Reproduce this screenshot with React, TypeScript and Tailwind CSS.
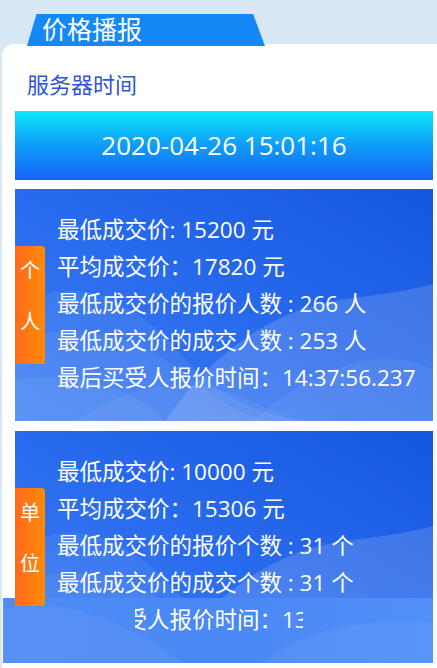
import React from "react";

const font = { fontFamily: '"Open Sans", "Noto Sans CJK SC", sans-serif' };

function Waves() {
  return (
    <svg
      className="pointer-events-none absolute inset-0 h-full w-full"
      viewBox="0 0 418 232"
      preserveAspectRatio="none"
    >
      <path d="M0 120 C 60 80, 120 110, 170 170 C 210 215, 260 230, 300 232 L0 232 Z" fill="#ffffff" opacity="0.07" />
      <path d="M0 150 C 80 130, 130 150, 190 200 C 220 225, 250 232, 260 232 L0 232 Z" fill="#ffffff" opacity="0.06" />
      <path d="M0 190 C 70 185, 120 200, 150 232 L0 232 Z" fill="#ffffff" opacity="0.06" />
      <path d="M150 232 C 200 160, 260 120, 330 110 C 370 105, 400 100, 418 95 L418 232 Z" fill="#ffffff" opacity="0.15" />
      <path d="M240 232 C 270 200, 320 175, 360 170 C 390 168, 405 175, 418 180 L418 232 Z" fill="#ffffff" opacity="0.06" />
      <path d="M60 232 C 110 200, 150 190, 200 200 C 240 210, 260 225, 280 232 Z" fill="#ffffff" opacity="0.05" />
    </svg>
  );
}

function Card({ tab, lines }: { tab: [string, string]; lines: string[] }) {
  return (
    <div className="relative flex h-[232px] w-[418px] items-center overflow-hidden bg-[linear-gradient(30deg,#3b7ef4_0%,#2a6cee_45%,#1556df_100%)]">
      <Waves />
      <div className="relative z-20 flex h-[118px] w-[30px] shrink-0 flex-col items-center gap-[27px] rounded-r-[4px] bg-[linear-gradient(90deg,#ff6a1c,#ff8a06)] pt-[13px] text-[20px] leading-[24px] text-white">
        <span>{tab[0]}</span>
        <span>{tab[1]}</span>
      </div>
      <div className="relative -mt-[3px] flex flex-col pl-[12px] text-[22.5px] leading-[37px] text-white whitespace-nowrap">
        {lines.map((l, i) => (
          <div key={i}>{l}</div>
        ))}
      </div>
    </div>
  );
}

export default function App() {
  return (
    <div style={font} className="relative h-[668px] w-[437px] overflow-hidden bg-[#d7e7f3]">
      <div className="relative z-10 ml-[27px] mt-[14px] flex h-[32px] w-[238px] items-center bg-[#1488f6] pl-[15px] text-[25px] leading-none text-white [clip-path:polygon(4%_0,95%_0,100%_100%,0_100%)]">
        <span className="-mt-[1px]">价格播报</span>
      </div>
      <div className="-mt-[2px] ml-[2px] flex h-[640px] w-[435px] flex-col rounded-tl-[12px] bg-white pl-[13px] pr-[4px] pt-[25px]">
        <div className="pl-[12px] text-[22px] leading-[30px] text-[#2f55d4]">服务器时间</div>
        <div className="mt-[12px] flex h-[69px] w-[418px] items-center justify-center bg-[linear-gradient(180deg,#0be8f9_0%,#0f9cf8_50%,#1463f8_100%)] text-[26px] text-white">
          2020-04-26 15:01:16
        </div>
        <div className="mt-[9px] flex flex-col gap-[10px]">
          <Card
            tab={["个", "人"]}
            lines={[
              "最低成交价: 15200 元",
              "平均成交价：17820 元",
              "最低成交价的报价人数 : 266 人",
              "最低成交价的成交人数 : 253 人",
              "最后买受人报价时间：14:37:56.237",
            ]}
          />
          <Card
            tab={["单", "位"]}
            lines={[
              "最低成交价: 10000 元",
              "平均成交价：15306 元",
              "最低成交价的报价个数 : 31 个",
              "最低成交价的成交个数 : 31 个",
              "最后买受人报价时间：13:52:11.402",
            ]}
          />
        </div>
      </div>
      <div className="absolute left-[3px] top-[598px] z-10 h-[65px] w-[430px] overflow-hidden bg-[linear-gradient(90deg,#4e8cf6,#4a88f5_50%,#5090f8)]">
        <svg className="absolute inset-0 h-full w-full" viewBox="0 0 430 65" preserveAspectRatio="none">
          <path d="M0 10 C 60 0, 120 20, 180 65 L0 65 Z" fill="#ffffff" opacity="0.05" />
          <path d="M260 65 C 300 30, 360 20, 430 25 L430 65 Z" fill="#ffffff" opacity="0.05" />
        </svg>
        <div className="absolute left-[132px] top-0 h-full w-[168px] overflow-hidden">
          <div className="absolute left-[-78px] top-[3px] whitespace-nowrap text-[22.5px] leading-[37px] text-white">
            最后买受人报价时间：13:52:11.402
          </div>
        </div>
      </div>
      <div className="absolute left-[135px] top-[663px] z-20 h-[5px] w-[168px] bg-white" />
    </div>
  );
}
